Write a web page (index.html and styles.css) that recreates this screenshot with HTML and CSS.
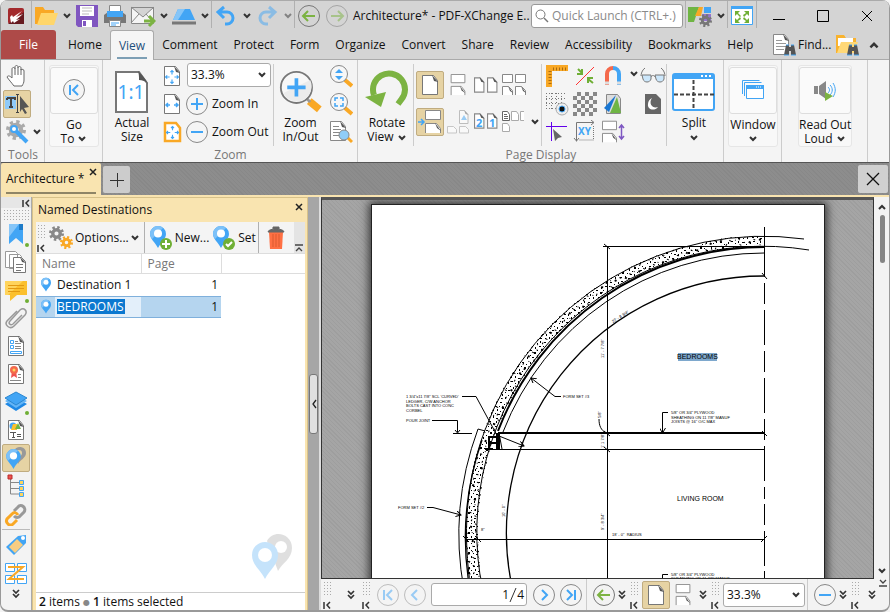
FILE: index.html
```html
<!DOCTYPE html>
<html lang="en">
<head>
<meta charset="utf-8">
<title>Architecture* - PDF-XChange Editor</title>
<link rel="stylesheet" href="styles.css">
</head>
<body>
<svg class="defs" aria-hidden="true">
<defs>
<symbol id="chev" viewBox="0 0 10 10"><path d="M2 3l3 3 3-3" fill="none" stroke="#333" stroke-width="2"/></symbol>
<symbol id="dbl" viewBox="0 0 10 12"><path d="M2 2l3 3 3-3M2 6l3 3 3-3" fill="none" stroke="#333" stroke-width="1.700"/></symbol>
<symbol id="first" viewBox="0 0 8 8"><path d="M1 1v7M7 1L4 4l3 3.500" fill="none" stroke="#333" stroke-width="1.500"/></symbol>
<symbol id="under" viewBox="0 0 10 8"><path d="M1 1h8M2 7l3-3 3 3" fill="none" stroke="#444" stroke-width="1.300"/></symbol>
<symbol id="ring" viewBox="0 0 24 24"><circle cx="12" cy="12" r="10.500" fill="#f5f5f5" stroke="#888" stroke-width="1"/></symbol>
<symbol id="goFirst" viewBox="0 0 24 24"><use href="#ring"/><path d="M8 7v10M16 7l-5 5 5 5" fill="none" stroke="#42a5f5" stroke-width="2"/></symbol>
<symbol id="goPrev" viewBox="0 0 24 24"><use href="#ring"/><path d="M14 7l-5 5 5 5" fill="none" stroke="#42a5f5" stroke-width="2"/></symbol>
<symbol id="goNext" viewBox="0 0 24 24"><use href="#ring"/><path d="M10 7l5 5-5 5" fill="none" stroke="#42a5f5" stroke-width="2"/></symbol>
<symbol id="goLast" viewBox="0 0 24 24"><use href="#ring"/><path d="M8 7l5 5-5 5M16 7v10" fill="none" stroke="#42a5f5" stroke-width="2"/></symbol>
<symbol id="back" viewBox="0 0 24 24"><circle cx="12" cy="12" r="10.500" fill="none" stroke="#777"/><path d="M6 12h12M11 7l-5 5 5 5" fill="none" stroke="#7cb342" stroke-width="2"/></symbol>
<symbol id="plus" viewBox="0 0 24 24"><use href="#ring"/><path d="M12 6v12M6 12h12" stroke="#42a5f5" stroke-width="2"/></symbol>
<symbol id="minus" viewBox="0 0 24 24"><use href="#ring"/><path d="M6 12h12" stroke="#42a5f5" stroke-width="2"/></symbol>
<symbol id="sheet" viewBox="0 0 24 24"><path d="M4.500 2.500h11l4 5v14h-15z" fill="#fff" stroke="#777"/><path d="M14 2l6 7-4-1z" fill="#555"/></symbol>
<symbol id="mini" viewBox="0 0 10 14"><path d="M.500.500h5l3.500 4v9H.500z" fill="#fff" stroke="#888"/><path d="M5 0l4.500 5-3-1z" fill="#555"/></symbol>
<symbol id="pin" viewBox="0 0 16 22"><path d="M8 0a8 8 0 0 1 8 8c0 5-5 8-8 14C5 16 0 13 0 8a8 8 0 0 1 8-8z" fill="#42a5f5"/><path d="M8 0a8 8 0 0 1 5 2L2 13C1 11 0 10 0 8a8 8 0 0 1 8-8z" fill="#7dc1f8"/><circle cx="8" cy="7.500" r="4" fill="#fff"/></symbol>
<symbol id="pair" viewBox="0 0 16 24"><path d="M.500.500h15v9H.500z" fill="#fff" stroke="#888"/><path d="M.500 23v-9.500h11l4 5V23" fill="#fff" stroke="#888"/><path d="M10 13l6 8-4-3z" fill="#555"/></symbol>
<symbol id="lens" viewBox="0 0 24 24"><path d="M16 16l7 6" stroke="#f9a825" stroke-width="4"/><circle cx="10" cy="10" r="8.500" fill="#f7f7f7" stroke="#888"/></symbol>
<symbol id="gear" viewBox="0 0 20 20"><circle cx="10" cy="10" r="8" fill="none" stroke="currentColor" stroke-width="4" stroke-dasharray="3.140"/><circle cx="10" cy="10" r="5" fill="none" stroke="currentColor" stroke-width="4.500"/></symbol>
<symbol id="arrows" viewBox="0 0 20 20"><path d="M10 2v5M10 13v5M2 10h5M13 10h5M8 4l2-2 2 2M8 16l2 2 2-2M4 8l-2 2 2 2M16 8l2 2-2 2" fill="none" stroke="#42a5f5" stroke-width="1.500"/></symbol>
<symbol id="binoc" viewBox="0 0 12 12"><path d="M2 1h3v2h2V1h3l2 10H7V7H5v4H0z" fill="#555"/><path d="M0 11h5M7 11h5M2 1h3M7 1h3" stroke="#42a5f5"/></symbol>
<pattern id="concrete" width="22" height="20" patternUnits="userSpaceOnUse"><rect width="22" height="20" fill="#fff"/><path d="M1 2h1v2H1zM4 1h2v1H4zM8 3h1v1H8zM11 1h1v2h-1zM15 2h2v1h-2zM19 4h1v1h-1zM3 6h1v1H3zM6 7h1v2H6zM10 6h2v1h-2zM14 6h1v1h-1zM17 7h2v2h-2zM21 8h1v1h-1zM1 10h2v1H1zM8 10h1v1H8zM12 9h1v2h-1zM15 11h1v1h-1zM20 12h1v1h-1zM5 12h2v2H5zM10 13h1v1h-1zM13 14h2v1h-2zM17 14h1v2h-1zM1 15h1v1H1zM3 17h2v1H3zM8 16h1v2H8zM11 18h2v1h-2zM16 18h1v1h-1zM20 17h1v2h-1z" fill="#000"/></pattern>
<pattern id="pebbles" width="17" height="19" patternUnits="userSpaceOnUse" patternTransform="rotate(27)"><path d="M2 1h2v2H2zM9 2h1v2H9zM14 4h2v1h-2zM5 6h1v1H5zM11 8h2v2h-2zM1 10h1v2H1zM7 11h1v1H7zM15 13h1v1h-1zM4 15h2v1H4zM10 16h2v1h-2z" fill="#000"/></pattern>
<marker id="arr" markerWidth="6" markerHeight="6" refX="5" refY="3" orient="auto" markerUnits="userSpaceOnUse"><path d="M0 0l5 3-5 3" fill="none" stroke="#000"/></marker>
</defs>
</svg>

<div class="window">
<header class="titlebar">
  <span class="cell logo"><svg width="18" height="18" viewBox="0 0 18 18"><rect x="1" y="1" width="16" height="16" rx="2" fill="#a32a2d"/><path d="M1 17L17 5v12z" fill="#661a20"/><path d="M3 10l2-2 1 2 9-6-6 6 7-3-7 6 4-1-6 4-1-2-2 2z" fill="#fff"/></svg></span>
  <i class="sep"></i>
  <button class="cell wide" aria-label="Open"><svg width="24" height="24" viewBox="0 0 24 24"><path d="M1 3h8l2 3h9v14H1z" fill="#f9a825"/><path d="M3 21L7 9h17l-4 12z" fill="#ffd66b"/></svg></button>
  <button class="drop" aria-label="Open options"><svg width="10" height="10"><use href="#chev"/></svg></button>
  <button class="cell wide" aria-label="Save"><svg width="24" height="24" viewBox="0 0 24 24"><path d="M1 1h22v22H3l-2-2z" fill="#8056c0"/><path d="M5 2h14v10H5zM7 16h10v7H7z" fill="#fff"/><path d="M7 4h10M7 7h10M7 10h7" stroke="#bbb"/><path d="M8 17h3v5H8z" fill="#8056c0"/></svg></button>
  <button class="cell wide" aria-label="Print"><svg width="24" height="24" viewBox="0 0 24 24"><path d="M6.500 1.500h11v8h-11z" fill="#fff" stroke="#888"/><path d="M1 11l4-3h14l4 3v8H1z" fill="#777"/><path d="M4 7h16v6H4z" fill="#42a5f5"/><path d="M6.500 16.500h11v6h-11z" fill="#fff" stroke="#888"/><path d="M8 19h8M8 21h5" stroke="#42a5f5"/></svg></button>
  <button class="cell wide" aria-label="Email"><svg width="26" height="24" viewBox="0 0 26 24"><path d="M1.500 3.500h22v16h-22zM1 3l12 10L24 3M1 19l8-9M24 19l-8-9" fill="#f5f5f5" stroke="#888"/><path d="M14 17h9M19 12l5 5-5 5" fill="none" stroke="#7cb342" stroke-width="3"/></svg></button>
  <button class="drop" aria-label="Email options"><svg width="10" height="10"><use href="#chev"/></svg></button>
  <button class="cell wide" aria-label="Scan"><svg width="26" height="24" viewBox="0 0 26 24"><path d="M7 5h12l5 11H2z" fill="#42a5f5"/><path d="M7 5h7L7 16H2z" fill="#85c5f8"/><path d="M1 19h24" stroke="#777" stroke-width="3"/></svg></button>
  <button class="drop" aria-label="Scan options"><svg width="10" height="10"><use href="#chev"/></svg></button>
  <i class="sep"></i>
  <button class="cell wide" aria-label="Undo"><svg width="22" height="22" viewBox="0 0 22 22"><path d="M3 7h9a6 6 0 0 1 0 12h-2M9 2L3 7l6 6" fill="none" stroke="#42a5f5" stroke-width="3"/></svg></button>
  <button class="drop" aria-label="Undo history"><svg width="10" height="10"><use href="#chev"/></svg></button>
  <button class="cell wide dim" aria-label="Redo"><svg width="22" height="22" viewBox="0 0 22 22"><path d="M19 7h-9a6 6 0 0 0 0 12h2M13 2l6 5-6 6" fill="none" stroke="#42a5f5" stroke-width="3"/></svg></button>
  <button class="drop dim" aria-label="Redo history"><svg width="10" height="10"><use href="#chev"/></svg></button>
  <i class="sep"></i>
  <button class="cell wide" aria-label="Back"><svg width="24" height="24"><use href="#back"/></svg></button>
  <button class="cell wide dim" aria-label="Forward"><svg class="flip" width="24" height="24"><use href="#back"/></svg></button>
  <span class="title">Architecture* - PDF-XChange E..</span>
  <label class="search"><svg width="14" height="14" viewBox="0 0 14 14"><circle cx="5.500" cy="5.500" r="4.500" fill="none" stroke="#777"/><path d="M9 9l4 4" stroke="#777" stroke-width="1.500"/></svg><input type="text" placeholder="Quick Launch (CTRL+.)" aria-label="Quick Launch"></label>
  <i class="sep"></i>
  <button class="cell wide" aria-label="Customize"><svg width="26" height="24" viewBox="0 0 26 24"><path d="M1 3h11l-5 15H1z" fill="#6fb544"/><path d="M12 3h4l-2 9H8z" fill="#f9a825"/><path d="M17 3h7v6h-7z" fill="#42a5f5"/><path d="M15 10h9v7h-9z" fill="#9575cd"/><svg x="12" y="10" width="13" height="13" color="#777"><use href="#gear"/></svg></svg></button>
  <button class="drop" aria-label="Customize options"><svg width="10" height="10"><use href="#chev"/></svg></button>
  <i class="sep"></i>
  <button class="cell wide" aria-label="Full screen"><svg width="24" height="22" viewBox="0 0 24 22"><path d="M1.500 1.500h21v18h-21z" fill="#fff" stroke="#42a5f5"/><path d="M1 1h22v3H1z" fill="#42a5f5"/><path d="M5 6h5l-2 2 3 3-1 1-3-3-2 2zM19 6h-5l2 2-3 2 1 2 3-3 2 2zM5 18h5l-2-2 3-2-1-2-3 3-2-2zM19 18h-5l2-2-3-2 1-2 3 3 2-2z" fill="#6faf35"/></svg></button>
  <i class="sep"></i>
  <button class="win" aria-label="Minimize"><svg width="14" height="14"><path d="M1 10.500h12" stroke="#000"/></svg></button>
  <button class="win" aria-label="Maximize"><svg width="14" height="14"><path d="M1.500 1.500h11v11h-11z" fill="none" stroke="#000"/></svg></button>
  <button class="win" aria-label="Close"><svg width="14" height="14"><path d="M2 2l10 10M12 2L2 12" stroke="#000"/></svg></button>
</header>

<nav class="tabs">
  <button class="file">File</button>
  <div class="tablist">
    <button>Home</button><button class="current">View</button><button>Comment</button><button>Protect</button><button>Form</button><button>Organize</button><button>Convert</button><button>Share</button><button>Review</button><button>Accessibility</button><button>Bookmarks</button><button>Help</button>
  </div>
  <button class="find"><svg width="24" height="24" viewBox="0 0 24 24"><path d="M1.500 1.500h11l4 5v15h-15z" fill="#fff" stroke="#888"/><path d="M4 7.500h6M4 10.500h10M4 13.500h10M4 16.500h8" stroke="#999"/><path d="M11 1l6 7-4-1z" fill="#555"/><use href="#binoc" x="12" y="11" width="12" height="12"/></svg>Find...</button>
  <button aria-label="Search files"><svg width="24" height="24" viewBox="0 0 24 24"><path d="M1 2h8l2 3h10v15H1z" fill="#f9b32f"/><path d="M3 5h15v8H3z" fill="#fff"/><path d="M2 20L6 9h17l-4 11z" fill="#ffd877"/><use href="#binoc" x="12" y="11" width="12" height="12"/></svg></button>
  <button class="fold" aria-label="Collapse ribbon"><svg class="up" width="12" height="12"><use href="#chev"/></svg></button>
</nav>

<section class="ribbon">
  <div class="group">
    <div class="body tools">
      <button class="sq" aria-label="Hand"><svg width="24" height="24" viewBox="0 0 24 24"><path d="M9 22C6 18 4 16 2 13c1-2 3-1 5 1V5c0-2 3-2 3 0V3c0-2 3-2 3 0v1c0-2 3-2 3 0v2c1-1 3-1 3 1v9c0 3-1 4-2 6zM10 5v6M13 4v7M16 5v6" fill="#fff" stroke="#666"/></svg></button>
      <button class="sq on" aria-label="Select text"><svg width="26" height="24" viewBox="0 0 26 24"><path d="M1 4h11v13H1z" fill="#8fcaf8"/><path d="M3 6h8v2M7 6v9M5 15h4M3 6v2" fill="none" stroke="#444" stroke-width="2"/><path d="M13.500 3v17M12 2.500h3M12 20.500h3" stroke="#444"/><path d="M16 4l9 11-5 1 3 5-2 1-3-5-2 3z" fill="#555"/></svg></button>
      <span class="row"><button class="sq" aria-label="Tool settings"><svg width="24" height="24" viewBox="0 0 24 24" color="#aaa"><use href="#gear" x="1" y="0" width="20" height="20"/><path d="M8 8l14 14" stroke="#42a5f5" stroke-width="4"/><circle cx="9" cy="9" r="3" fill="#fff" stroke="#42a5f5" stroke-width="2"/></svg></button><button class="drop" aria-label="More tools"><svg width="10" height="10"><use href="#chev"/></svg></button></span>
    </div>
    <h2>Tools</h2>
  </div>
  <div class="group">
    <button class="card"><span class="tile"><svg width="24" height="24"><use href="#goFirst"/></svg></span>Go<br>To <svg width="10" height="10"><use href="#chev"/></svg></button>
  </div>
  <div class="group">
    <div class="body">
      <button class="big"><svg width="36" height="44" viewBox="0 0 36 44"><path d="M2 2h23l8 11v29H2z" fill="#fff" stroke="#777" stroke-width="2"/><path d="M24 1c3 3 8 8 10 13-2-3-6-4-9-4 0-3 0-6-1-9z" fill="#555"/><text x="17" y="29" text-anchor="middle" class="ratio">1:1</text></svg>Actual<br>Size</button>
      <div class="col">
        <button class="sq" aria-label="Fit page"><svg width="24" height="24" viewBox="0 0 24 24"><use href="#sheet" width="24" height="24"/><use href="#arrows" x="4" y="5" width="16" height="16"/></svg></button>
        <button class="sq" aria-label="Fit width"><svg width="24" height="24" viewBox="0 0 24 24"><use href="#sheet" width="24" height="24"/><path d="M6 13h4M14 13h4M8 11l-2 2 2 2M16 11l2 2-2 2" fill="none" stroke="#42a5f5" stroke-width="1.500"/></svg></button>
        <button class="sq" aria-label="Fit visible"><svg width="24" height="24" viewBox="0 0 24 24"><path d="M5 3h11l4 5v13H5z" fill="#fff" stroke="#f9a825" stroke-width="2.500"/><use href="#arrows" x="5" y="5" width="15" height="15"/></svg></button>
      </div>
      <div class="col zoomcol">
        <span class="combo"><select aria-label="Zoom level"><option>33.3%</option></select><svg width="10" height="10"><use href="#chev"/></svg></span>
        <button class="line"><svg width="24" height="24"><use href="#plus"/></svg>Zoom In</button>
        <button class="line"><svg width="24" height="24"><use href="#minus"/></svg>Zoom Out</button>
      </div>
      <i class="rule"></i>
      <button class="big zoomio"><svg width="48" height="48" viewBox="0 0 48 48"><path d="M33 34l11 9" stroke="#f9a825" stroke-width="8"/><path d="M30 31l4 4" stroke="#999" stroke-width="3"/><circle cx="19" cy="19" r="17" fill="#f7f7f7" stroke="#777" stroke-width="2"/><path d="M5 25a16 16 0 0 0 29-14z" fill="#ebebeb"/><path d="M19 9v20M9 19h20" stroke="#42a5f5" stroke-width="4"/></svg>Zoom<br>In/Out</button>
      <div class="col">
        <button class="sq" aria-label="Dynamic zoom"><svg width="24" height="24"><use href="#lens"/><path d="M6 9l4-4 4 4zM6 12l4 4 4-4z" fill="#42a5f5"/></svg></button>
        <button class="sq" aria-label="Zoom to selection"><svg width="24" height="24"><use href="#lens"/><path d="M6 9V6h3M11 6h3v3M14 11v3h-3M9 14H6v-3" fill="none" stroke="#42a5f5" stroke-width="1.500"/></svg></button>
        <button class="sq" aria-label="Loupe"><svg width="24" height="24"><path d="M1.500 1.500h11l4 5v14h-15zM4 6.500h6M4 9.500h8M4 12.500h7M4 15.500h6" fill="#fff" stroke="#888"/><path d="M11 1l6 7-4-1z" fill="#555"/><path d="M19 18l4 4" stroke="#f9a825" stroke-width="3"/><circle cx="15" cy="15" r="5" fill="#90cdf8" stroke="#888"/></svg></button>
      </div>
    </div>
    <h2>Zoom</h2>
  </div>
  <div class="group">
    <div class="body">
      <button class="big rotate"><svg width="46" height="44" viewBox="0 0 46 44"><path d="M10 25a16 16 0 1 1 27 5l-3 4" fill="none" stroke="#7cb342" stroke-width="6"/><path d="M1 27l21-5-5 15z" fill="#7cb342"/></svg>Rotate<br>View <svg width="10" height="10"><use href="#chev"/></svg></button>
      <i class="rule"></i>
      <div class="layouts">
        <button class="sq on" aria-label="Single page"><svg width="24" height="24"><use href="#sheet"/></svg></button>
        <button class="sq" aria-label="Continuous"><svg width="16" height="22"><use href="#pair"/></svg></button>
        <button class="sq" aria-label="Two pages"><svg width="24" height="16"><use href="#mini" x="0" y="0" width="11" height="16"/><use href="#mini" x="13" y="0" width="11" height="16"/></svg></button>
        <button class="sq" aria-label="Two pages continuous"><svg width="26" height="24"><path d="M1.500 1.500h10v8h-10zM14.500 1.500h10v8h-10zM1.500 22v-8.500h6l4 4V22M14.500 22v-8.500h6l4 4V22" fill="#fff" stroke="#888"/><path d="M7 13l5 7-3-2zM20 13l5 7-3-2z" fill="#555"/></svg></button>
        <i></i>
        <button class="sq on" aria-label="Show gaps"><svg width="24" height="24"><use href="#pair" x="7" width="16" height="24"/><path d="M0 12h6M3 9l3 3-3 3" fill="none" stroke="#42a5f5" stroke-width="1.500"/></svg></button>
        <button class="sq dim" aria-label="Cover page"><svg width="24" height="24"><use href="#mini" x="13" y="0" width="10" height="14"/><path d="M15 10l3-5 3 5z" fill="#42a5f5"/><path d="M1.500 16.500h6l3 3V23h-9zM13.500 16.500h6l3 3V23h-9z" fill="#fff" stroke="#999"/></svg></button>
        <button class="sq" aria-label="Right to left"><svg width="26" height="18"><use href="#mini" x="1" width="11" height="16"/><use href="#mini" x="14" width="11" height="16"/><text x="3" y="14" class="num">2</text><text x="16" y="14" class="num">1</text></svg></button>
        <button class="sq" aria-label="Spread rows"><svg width="26" height="24"><path d="M1.500 1.500h5l2 3v6h-7zM3 4.500h3M3 6.500h4M3 8.500h4" fill="#fff" stroke="#666"/><path d="M10.500 1.500h5l2 3v6h-7zM1.500 13.500h5l2 3v5h-7zM23 1.500h-3.500v9H23" fill="#fff" stroke="#aaa"/></svg></button>
        <button class="drop" aria-label="More layouts"><svg width="10" height="10"><use href="#chev"/></svg></button>
      </div>
      <i class="rule"></i>
      <div class="guides">
        <button class="sq" aria-label="Rulers"><svg width="24" height="24"><path d="M1 1h22v6H7v16H1z" fill="#f9a825"/><path d="M5 7v15M8 5h14" stroke="#a96b10" stroke-dasharray="1 2" stroke-width="3"/></svg></button>
        <button class="sq" aria-label="Snap"><svg width="24" height="24"><path d="M3 21L21 3" stroke="#f33"/><path d="M5 5l4 4M9 5v5H4M20 19l-5-4M15 19v-5h5" fill="none" stroke="#6faf35" stroke-width="2"/></svg></button>
        <button class="sq" aria-label="Magnet"><svg width="24" height="24"><path d="M6 21V10a6 6 0 0 1 6-6" fill="none" stroke="#f4694c" stroke-width="4"/><path d="M12 4a6 6 0 0 1 6 6v11" fill="none" stroke="#42a5f5" stroke-width="4"/><path d="M4 19h4M16 19h4" stroke="#ddd" stroke-width="3"/></svg></button>
        <button class="drop" aria-label="Snap options"><svg width="10" height="10"><use href="#chev"/></svg></button>
        <button class="sq" aria-label="Reading"><svg width="26" height="20"><path d="M5 2C2 4 1 8 1 10M21 2c3 2 4 6 4 8M11 11c1-2 3-2 4 0" fill="none" stroke="#777"/><path d="M2 9h9v4c-1 4-7 4-8 0zM15 9h9v4c-1 4-7 4-8 0z" fill="#cce7fb" stroke="#777"/></svg></button>
        <button class="sq" aria-label="Grid"><svg width="24" height="24"><path d="M1 1.500h19M1 6.500h19M1 11.500h19M1 16.500h10M1.500 1v18M6.500 1v18M11.500 1v12M16.500 1v12" stroke="#777" stroke-dasharray="1 2"/><circle cx="17" cy="17" r="6" fill="#eee" stroke="#aaa"/><circle cx="17" cy="17" r="3" fill="#111" stroke="#42a5f5"/></svg></button>
        <button class="sq" aria-label="Transparency grid"><span class="checker"></span></button>
        <button class="sq" aria-label="Thin lines"><svg width="22" height="22"><path d="M4.500 1.500h11l3 4v15h-14z" fill="#ddd" stroke="#888"/><path d="M14 2L2 15l5 4z" fill="#1976d2"/><path d="M15 4l4 16H8z" fill="#6fb544"/></svg></button>
        <i></i>
        <button class="sq" aria-label="Dark mode"><svg width="18" height="22"><path d="M1 1h11l5 5v15H1z" fill="#666"/><path d="M8 5c-4 6 1 11 6 9-4 5-11 2-10-3 0-3 2-5 4-6z" fill="#fff"/></svg></button>
        <button class="sq" aria-label="Guides"><svg width="24" height="24"><path d="M1 6.500h21M6.500 2v19" stroke="#6200ea"/><path d="M8 9l9 8-4 1-3 3z" fill="#666"/></svg></button>
        <button class="sq" aria-label="Coordinates"><svg width="24" height="24"><path d="M3.500 2.500h17M3.500 2.500v19M18 0l3 2.500-3 2.500M1 18l2.500 3 2.500-3" fill="none" stroke="#777"/><path d="M20.500 6v14H6" fill="none" stroke="#777" stroke-dasharray="1 1"/><text x="5" y="15" class="xy">XY</text></svg></button>
        <button class="sq" aria-label="Page gap"><svg width="24" height="24"><use href="#pair" x="1" width="15" height="24"/><path d="M20.500 6v12M18 8l2.500-3L23 8M18 16l2.500 3 2.500-3" fill="none" stroke="#7e57c2" stroke-width="1.500"/></svg></button>
      </div>
      <i class="rule"></i>
      <button class="big split"><svg width="44" height="44" viewBox="0 0 44 44"><rect x="1" y="4" width="41" height="36" rx="2" fill="#fff" stroke="#42a5f5" stroke-width="2"/><path d="M1 4h41v5H1z" fill="#42a5f5"/><path d="M29 6h2M33 6h2M37 6h2" stroke="#fff" stroke-width="2"/><path d="M21.500 10v30M2 24.500h40" stroke="#444" stroke-width="2" stroke-dasharray="4 2"/></svg>Split<br><svg width="10" height="10"><use href="#chev"/></svg></button>
    </div>
    <h2>Page Display</h2>
  </div>
  <div class="group">
    <button class="card"><span class="tile"><svg width="24" height="24"><path d="M1.500 16V2.500h17M3.500 18V4.500h17" fill="none" stroke="#42a5f5"/><path d="M5.500 7.500h17v13h-17z" fill="#fff" stroke="#42a5f5"/><path d="M5 7h18v4H5z" fill="#42a5f5"/><path d="M15 9h6" stroke="#fff" stroke-dasharray="1 1"/></svg></span>Window<br><svg width="10" height="10"><use href="#chev"/></svg></button>
  </div>
  <div class="group read">
    <button class="card"><span class="tile"><svg width="24" height="24"><path d="M1 8h4v8H1zM6 8l7-5v18l-7-5z" fill="#888"/><path d="M15 9c2 2 2 4 0 6M17 7c3 3 3 7 0 10M20 5c3 5 3 9 0 14" fill="none" stroke="#42a5f5"/><path d="M12 14l8 4-8 5z" fill="#7cb342"/></svg></span>Read Out<br>Loud <svg width="10" height="10"><use href="#chev"/></svg></button>
  </div>
</section>

<div class="docbar">
  <div class="doctab"><span>Architecture *</span><button aria-label="Close tab"><svg width="8" height="8"><path d="M1 1l6 6M7 1L1 7" stroke="#222" stroke-width="1.500"/></svg></button></div>
  <button class="newtab" aria-label="New tab"><svg width="16" height="16"><path d="M8.500 1v14M1 8.500h14" stroke="#333"/></svg></button>
  <button class="closedoc" aria-label="Close document"><svg width="14" height="14"><path d="M1 1l12 12M13 1L1 13" stroke="#111" stroke-width="1.300"/></svg></button>
</div>

<main class="work">
  <aside class="side">
    <span class="sidetop"><svg width="8" height="8"><use href="#first"/></svg></span>
    <i class="grip"></i>
    <button class="sq dot" aria-label="Bookmarks"><svg width="16" height="22"><path d="M1 1h14v20l-7-6-7 6z" fill="#42a5f5"/><path d="M1 1h10L1 14z" fill="#85c5f8"/><path d="M11 1h4v6h-4z" fill="#1e7bc8"/></svg></button>
    <button class="sq" aria-label="Thumbnails"><svg width="24" height="24"><path d="M1.500 1.500h10l2 2v14h-12zM5.500 4.500h10l2 2v12h-12z" fill="#fff" stroke="#999"/><path d="M9.500 7.500h8l4 4v11h-12zM12 14.500h7M12 17.500h7M12 20.500h5" fill="#fff" stroke="#777"/><path d="M16 7l6 6-4-1z" fill="#555"/></svg></button>
    <button class="sq dot" aria-label="Comments"><svg width="24" height="22"><path d="M1 2h22v14H13l-7 6v-6H1z" fill="#fbc02d"/><path d="M1 2h18L4 16H1z" fill="#ffd45c"/><path d="M4 6.500h16M4 9.500h16M4 12.500h12" stroke="#e39a12"/></svg></button>
    <button class="sq" aria-label="Attachments"><svg width="24" height="24"><path d="M18 9l-9 9c-3 2-5-1-3-3L16 4c4-3 8 1 5 5L10 20c-4 4-10-1-7-5L13 5" fill="none" stroke="#999" stroke-width="1.500"/></svg></button>
    <button class="sq" aria-label="Fields"><svg width="24" height="24"><use href="#sheet"/><path d="M6.500 6.500h3v3h-3zM6.500 11.500h3v3h-3zM6.500 17.500h11v2h-11z" fill="none" stroke="#42a5f5"/><path d="M11 7.500h3M11 9.500h6M11 12.500h6M11 14.500h6" stroke="#888"/></svg></button>
    <button class="sq" aria-label="Signatures"><svg width="24" height="24"><use href="#sheet"/><path d="M8 9l-1 7 3-2 3 2-1-7z" fill="#ef5350"/><circle cx="10" cy="8" r="4" fill="#f4694c"/><circle cx="10" cy="8" r="1.500" fill="#ffd45c"/><path d="M14 12.500h3M14 15.500h3M6 18.500h11" stroke="#888"/></svg></button>
    <button class="sq dot" aria-label="Layers"><svg width="24" height="22"><path d="M1 13l11-6 11 6-11 7z" fill="#1e88e5"/><path d="M1 10l11-6 11 6-11 7z" fill="#64b5f6"/><path d="M1 7l11-6 11 6-11 7z" fill="#42a5f5" stroke="#2b87d1"/></svg></button>
    <button class="sq" aria-label="Content"><svg width="24" height="24"><use href="#sheet"/><circle cx="9" cy="8" r="3.500" fill="#42a5f5"/><path d="M9 6h4v6H7z" fill="#fbc02d"/><path d="M14 5l3 6h-6z" fill="#6fb544"/><path d="M6 14.500h6M9.500 14v6M8 19.500h3M13 16.500h4M13 18.500h4" stroke="#555"/></svg></button>
    <button class="sq on" aria-label="Named destinations"><svg width="24" height="24"><path d="M10 5c2-6 12-5 12 2 0 5-6 7-8 11z" fill="#999"/><circle cx="15" cy="7" r="3" fill="#e6d3a4"/><use href="#pin" x="2" y="3" width="15" height="20"/></svg></button>
    <button class="sq" aria-label="Model tree"><svg width="22" height="24"><path d="M5.500 4v16H14M5 8.500h9M5 14.500h9" fill="none" stroke="#888"/><path d="M3 1h4v4H3z" fill="#ef5350" stroke="#ba2c28"/><path d="M14.500 6.500h4v4h-4zM14.500 12.500h4v4h-4zM14.500 18.500h4v4h-4z" fill="#ffd45c" stroke="#42a5f5"/></svg></button>
    <button class="sq" aria-label="Links"><svg width="24" height="24"><path d="M10 9l4-4c3-4 9 1 6 5l-5 5c-2 1-4 0-5-1" fill="none" stroke="#999" stroke-width="3"/><path d="M14 13c-2-3-4-3-6-1l-5 5c-2 4 3 8 6 5l4-4" fill="none" stroke="#f9a825" stroke-width="3"/></svg></button>
    <hr>
    <button class="sq" aria-label="Tags"><svg width="24" height="24"><path d="M2 14L14 3l8-1v8L10 22z" fill="#42a5f5"/><path d="M5 14l8-8 6 6-8 8z" fill="#f8cd82"/><circle cx="19" cy="5" r="2" fill="#fff"/></svg></button>
    <button class="sq" aria-label="Order"><svg width="24" height="24"><path d="M1.500 2.500h9v8h-9zM13.500 2.500h9v8h-9zM1.500 14.500h9v8h-9zM13.500 14.500h9v8h-9z" fill="#fff" stroke="#42a5f5"/><path d="M4 6h15L5 18h15" fill="none" stroke="#f9a825" stroke-width="2"/></svg></button>
    <svg class="more" width="10" height="12"><use href="#dbl"/></svg>
  </aside>

  <section class="panel">
    <header><h1>Named Destinations</h1><button aria-label="Close pane"><svg width="8" height="8"><path d="M1 1l6 6M7 1L1 7" stroke="#222" stroke-width="1.500"/></svg></button></header>
    <div class="ptools">
      <span class="handle"><i class="grip"></i><svg width="8" height="8"><use href="#first"/></svg></span>
      <button class="line"><svg width="24" height="24"><svg width="15" height="15" color="#888"><use href="#gear"/></svg><svg x="11" y="10" width="13" height="13" color="#f9a825"><use href="#gear"/></svg></svg>Options...</button>
      <button class="drop" aria-label="Options menu"><svg width="10" height="10"><use href="#chev"/></svg></button>
      <i class="sep"></i>
      <button class="line"><svg width="24" height="24"><use href="#pin" x="1" y="0" width="16" height="22"/><circle cx="17" cy="18" r="6" fill="#6faf35"/><path d="M17 14v8M13 18h8" stroke="#fff" stroke-width="2"/></svg>New...</button>
      <button class="line"><svg width="24" height="24"><use href="#pin" x="1" y="0" width="16" height="22"/><circle cx="17" cy="18" r="6" fill="#6faf35"/><path d="M14 18l2 2 4-4" fill="none" stroke="#fff" stroke-width="2"/></svg>Set</button>
      <i class="sep"></i>
      <button class="cell" aria-label="Delete"><svg width="18" height="24"><path d="M2 6h14l-1 17H3z" fill="#ff7043"/><path d="M6 8v13M9 8v13M12 8v13" stroke="#d95a30"/><path d="M1 6c0-4 16-4 16 0zM6 3V1h6v2" fill="#666" stroke="#666"/></svg></button>
      <span class="overflow"><svg width="10" height="8"><use href="#under"/></svg></span>
    </div>
    <div class="list">
      <table>
        <colgroup><col class="c1"><col class="c2"><col></colgroup>
        <thead><tr><th>Name</th><th>Page</th><th></th></tr></thead>
        <tbody>
          <tr><td><span class="name"><svg width="10" height="15"><use href="#pin"/></svg>Destination 1</span></td><td>1</td><td></td></tr>
          <tr class="picked"><td><span class="name"><svg width="10" height="15"><use href="#pin"/></svg><span class="edit"><input type="text" value="BEDROOMS" aria-label="Destination name"></span></span></td><td>1</td><td></td></tr>
        </tbody>
      </table>
      <svg class="mark" width="42" height="48" viewBox="0 0 42 48"><path d="M16 8C22-4 41 0 41 15c0 11-10 15-14 23z" fill="#999"/><circle cx="30" cy="14" r="6" fill="#fff"/><path d="M14 9a13 13 0 0 1 13 13c0 10-8 14-13 24C9 36 1 32 1 22A13 13 0 0 1 14 9z" fill="#42a5f5"/><circle cx="14" cy="22" r="7" fill="#fff"/></svg>
    </div>
    <footer><b>2</b> items <em>●</em> <b>1</b> items selected</footer>
  </section>

  <div class="splitter"><button aria-label="Collapse pane"><svg width="6" height="10"><path d="M5 1L2 5l3 4" fill="none" stroke="#222" stroke-width="1.300"/></svg></button></div>

  <section class="viewer">
    <div class="canvas">
      <div class="paper">
      <svg viewBox="371 205 452 390" width="452" height="390" fill="none" stroke="#000">
        <path id="wall" d="M763 236A297 297 0 0 0 465 540L468 590 480 590 477 540A286 286 0 0 1 763 246z" fill="url(#concrete)" stroke="none"/>
        <use href="#wall"/>
        <path d="M763 236A297 297 0 0 0 465 540L468 590 480 590 477 540A286 286 0 0 1 763 246z" fill="url(#pebbles)" stroke="none"/>
        <path d="M803 239A297 297 0 0 0 484 430C461 490 463 550 471 595M808 250A286 286 0 0 0 479 575L484 595"/>
        <path d="M763 247A286 286 0 0 0 497 431" stroke-width="2"/>
        <path d="M481 440A299 299 0 0 0 469 590" stroke-width="1.300"/>
        <path d="M763 253A280 280 0 0 0 502 432M484 431l-7-2A304 304 0 0 0 463 590"/>
        <path d="M763 276A257 257 0 0 0 513 595" stroke-width="1.300"/>
        <path d="M606.500 246v345M602 246.500h161M488 449.500h275M465 539.500h298"/>
        <path d="M497 433h266" stroke-width="2"/>
        <path d="M763.500 227v50M763.500 283v21M763.500 310v35M763.500 351v21M763.500 378v35M763.500 419v21M763.500 446v35M763.500 487v12M763.500 504v21M763.500 531v35M763.500 571v24"/>
        <path d="M497 433v16" stroke-width="4"/><path d="M488 436v14M487 437h10M489 443h8M484 449h8" stroke-width="2"/>
        <path d="M603 244l6 5M603 431l6 5M603 447l6 5M760 542l6-6M462 536l6 6M474 536l6 6M761 273l5 6M761 431l5 5"/>
        <path d="M461 396.500h14l20 37M431 420.500h25.500V432M452 433.500h19M454 430l2.500 3 2.500-3M498 433l3 16"/>
        <path d="M560 396.500h-6L530 378" marker-end="url(#arr)"/><path d="M426 507.500h6L460 515" marker-end="url(#arr)"/>
        <path d="M498 436l25 10" marker-end="url(#arr)"/><path d="M667 412.500h-5.500V433" marker-end="url(#arr)"/><path d="M667 574.500h-5.500V594M598 419c0 7 2 11 7 14"/>
        <rect x="677" y="353" width="39" height="8" fill="#7ea8cd" stroke="none"/>
        <g class="notes">
          <text x="676" y="359" class="room">BEDROOMS</text><text x="676" y="501" class="room">LIVING ROOM</text>
          <text x="562" y="398">FORM SET #3</text><text x="397" y="509">FORM SET #2</text>
          <text x="405" y="398">1 3/4"x11 7/8" SCL 'CURVED'</text><text x="405" y="403">LEDGER, C/W ANCHOR</text><text x="405" y="407">BOLTS CAST INTO CONC</text><text x="405" y="412">CORBEL</text><text x="405" y="422">POUR JOINT</text>
          <text x="670" y="414">5/8" OR 3/4" PLYWOOD</text><text x="670" y="419">SHEATHING ON 11 7/8" MANUF</text><text x="670" y="423">JOISTS @ 16" O/C MAX</text>
          <text x="670" y="576">5/8" OR 3/4" PLYWOOD</text><text x="670" y="580">SHEATHING ON 11 7/8" MANUF</text>
          <text x="611" y="536">18' - 0"  RADIUS</text><text x="480" y="531">8"</text>
          <text transform="translate(603 358) rotate(-90)">11' - 7 7/8"</text><text transform="translate(603 448) rotate(-90)">1' 1 7/8"</text><text transform="translate(600 418) rotate(-90)">5/8"</text><text transform="translate(603 530) rotate(-90)">9' - 8 3/4"</text><text transform="translate(504 517) rotate(-90)">10' - 0"</text><text transform="translate(612 323) rotate(-33)">22' - 8 3/4"</text>
        </g>
      </svg>
      </div>
    </div>
    <div class="scroll"><svg class="up" width="10" height="10"><use href="#chev"/></svg><i></i><svg width="10" height="10"><use href="#chev"/></svg></div>
    <div class="navbar">
      <span class="handle"><i class="grip"></i><svg width="8" height="8"><use href="#first"/></svg></span>
      <svg class="gapl" width="10" height="12"><use href="#dbl"/></svg>
      <span class="handle gapl"><i class="grip"></i><svg width="8" height="8"><use href="#first"/></svg></span>
      <button class="sq dim" aria-label="First page"><svg width="24" height="24"><use href="#goFirst"/></svg></button>
      <button class="sq dim" aria-label="Previous page"><svg width="24" height="24"><use href="#goPrev"/></svg></button>
      <label class="pageno"><input type="text" value="1" aria-label="Page"><svg width="8" height="16"><path d="M7 1L1 15" stroke="#333"/></svg><span>4</span></label>
      <button class="sq" aria-label="Next page"><svg width="24" height="24"><use href="#goNext"/></svg></button>
      <button class="sq" aria-label="Last page"><svg width="24" height="24"><use href="#goLast"/></svg></button>
      <i class="rule"></i>
      <button class="sq" aria-label="Previous view"><svg width="24" height="24"><use href="#back"/></svg></button>
      <svg width="10" height="12"><use href="#dbl"/></svg>
      <span class="handle"><i class="grip"></i><svg width="8" height="8"><use href="#first"/></svg></span>
      <button class="sq on" aria-label="Single page"><svg width="24" height="24"><use href="#sheet"/></svg></button>
      <button class="sq" aria-label="Continuous"><svg width="16" height="22"><use href="#pair"/></svg></button>
      <svg class="gaps" width="10" height="12"><use href="#dbl"/></svg>
      <span class="handle"><i class="grip"></i><svg width="8" height="8"><use href="#first"/></svg></span>
      <span class="combo"><select aria-label="Zoom"><option>33.3%</option></select><svg width="10" height="10"><use href="#chev"/></svg></span>
      <i class="rule"></i>
      <button class="sq" aria-label="Zoom out"><svg width="24" height="24"><use href="#minus"/></svg></button>
      <svg width="10" height="12"><use href="#dbl"/></svg>
      <span class="handle"><i class="grip"></i><svg width="8" height="8"><use href="#first"/></svg></span>
      <svg class="last" width="10" height="12"><use href="#dbl"/></svg>
      <svg class="corner up" width="10" height="8"><use href="#under"/></svg>
    </div>
  </section>
</main>
</div>
</body>
</html>
```
FILE: styles.css
```css
* { box-sizing: border-box; }
body { margin: 0; background: #f4f4f4; font: 12px/14px "Open Sans", "Noto Sans", sans-serif; color: #111; }
button { border: 0; padding: 0; background: none; font: inherit; color: inherit; display: flex; align-items: center; justify-content: center; flex: none; }
input, select { font: inherit; color: inherit; min-width: 0; outline: 0; }
svg { display: block; flex: none; }
h1, h2 { margin: 0; font: inherit; }
.defs { position: absolute; width: 0; height: 0; }
.window { height: 100vh; display: grid; grid-template-columns: minmax(0, 1fr); grid-template-rows: 30px 30px 103px 34px minmax(0, 1fr); border: 1px solid #999; border-width: 0 1px 2px; border-radius: 8px; overflow: hidden; background: #f3f3f3; }
.dim { opacity: .5; }
.flip { transform: scaleX(-1); }
.up { transform: scaleY(-1); }
.sep { flex: none; align-self: stretch; width: 1px; background: #b0b0b0; }

.titlebar { display: flex; align-items: center; background: #d4d4d4; border-top: 1px solid #aaa; }
.cell { width: 26px; height: 26px; display: flex; align-items: center; justify-content: center; flex: none; }
.cell.wide { width: 28px; }
.cell.logo { width: 30px; }
.drop { width: 13px; height: 24px; }
.titlebar .sep { margin-bottom: 2px; }
.title { flex: 1; min-width: 0; white-space: nowrap; overflow: hidden; padding-left: 2px; line-height: 18px; }
.search { flex: none; display: flex; align-items: center; gap: 3px; width: 152px; height: 24px; margin-right: 2px; padding: 0 3px; background: #fff; border: 1px solid #999; border-radius: 3px; }
.search input { flex: 1; border: 0; padding: 0; background: none; }
.search input::placeholder { color: #8a8a8a; }
.win { width: 44px; height: 26px; }

.tabs { display: flex; background: #d4d4d4; border-bottom: 1px solid #aaa; padding-right: 1px; }
.file { width: 55px; background: #ae4a48; color: #fff; border-radius: 3px 3px 0 0; }
.tablist { flex: none; width: 700px; display: flex; justify-content: space-between; padding: 0 0 0 4px; }
.tablist button { padding: 0 8px; }
.tablist .current { position: relative; background: #f5f5f5; border: 1px solid #aaa; border-bottom: 0; border-radius: 3px 3px 0 0; color: #1d4f7c; margin-bottom: -1px; }
.tablist .current::after { content: ""; position: absolute; left: 6px; right: 6px; bottom: 1px; height: 2px; background: #7d9fb5; }
.find { gap: 2px; margin: 0 4px 0 16px; }
.fold { flex: 1; }

.ribbon { display: flex; background: #f4f4f4; border-bottom: 1px solid #555; }
.group { display: flex; flex-direction: column; border-right: 1px solid #ccc; padding: 1px 2px 0 3px; }
.body { display: flex; height: 87px; padding-top: 1px; }
.group h2 { text-align: center; color: #777; line-height: 14px; }
.sq { width: 28px; height: 28px; border: 1px solid transparent; border-radius: 2px; }
.sq.on { background: #e6d3a4; border-color: #c0ac80; }
.tools { flex-direction: column; width: 39px; margin-left: -1px; }
.row { display: flex; }
.row .drop { width: 11px; height: 28px; }
.card { display: block; width: 50px; height: 82px; margin: 4px 1px 0; border: 1px solid #e6e6e6; border-radius: 3px; background: #f8f8f8; white-space: nowrap; }
.card .tile { display: flex; align-items: center; justify-content: center; height: 47px; margin-bottom: 4px; border: 1px solid #ddd; border-radius: 3px; background: #fafafa; }
.card svg, .big svg { display: inline-block; vertical-align: middle; }
.read { width: 86px; align-items: center; }
.read .card { width: 54px; }
.big { display: block; width: 52px; padding-top: 4px; height: 86px; white-space: nowrap; }
.big > svg:first-child { display: block; height: 44px; margin: 0 auto 2px; }
.ratio { font: 19px "Noto Sans", sans-serif; fill: #42a5f5; }
.num { font: bold 11px "Noto Sans", sans-serif; fill: #42a5f5; }
.xy { font: bold 10px "Noto Sans", sans-serif; fill: #42a5f5; }
.zoomcol { width: 88px; margin-left: -1px; }
.zoomio { width: 53px; }
.line { height: 28px; gap: 3px; white-space: nowrap; }
.combo { display: grid; height: 24px; margin: 1px 2px 3px; align-items: center; justify-items: end; }
.combo select { grid-area: 1 / 1; width: 100%; height: 100%; appearance: none; background: #fff; border: 1px solid #aaa; border-radius: 3px; padding: 0 3px; }
.combo svg { grid-area: 1 / 1; margin-right: 4px; pointer-events: none; }
.rule { flex: none; width: 1px; background: #ccc; margin: 2px 0; }
.rotate { width: 52px; }
.layouts { display: grid; grid-template-columns: repeat(4, 28px) 12px; grid-auto-rows: 37px; align-items: center; padding: 4px 1px 0 2px; height: 80px; }
.guides { display: grid; grid-template-columns: repeat(3, 28px) 12px 27px; grid-auto-rows: 28px; padding-left: 1px; }
.checker { width: 24px; height: 24px; background: repeating-conic-gradient(#888 0 25%, #f4f4f4 0 50%) 0 0 / 8px 8px; }
.split { width: 54px; }

.docbar { display: flex; background: #8a8a8a repeating-linear-gradient(45deg, #888 0 1px, #8d8d8d 1px 3px); border-bottom: 2px solid #f9e4b0; }
.doctab { display: flex; width: 100px; background: #f9e4b0; border-radius: 2px 2px 0 0; padding: 0 5px; position: relative; margin-bottom: -2px; justify-content: space-between; }
.doctab::after { content: ""; position: absolute; left: 5px; right: 5px; bottom: 3px; height: 2px; background: #8f8566; }
.doctab span { line-height: 32px; white-space: nowrap; }
.doctab button { height: 18px; margin-right: -1px; }
.newtab { width: 27px; height: 27px; margin: 3px 0 0 2px; background: #ccc; border-radius: 2px; }
.closedoc { width: 30px; height: 28px; margin: 2px 1px 0 auto; background: #d0d0d0; border-radius: 2px; }

.work { display: grid; grid-template: minmax(0, 1fr) / 31px 276px 11px minmax(0, 1fr); min-height: 0; }
.side { display: flex; flex-direction: column; padding-left: 1px; border-right: 1px solid #aaa; min-height: 0; }
.sidetop { display: flex; flex: none; justify-content: flex-end; padding: 2px 1px; height: 11px; background: #e6e6e6; margin-left: -1px; }
.grip { display: block; flex: none; background: radial-gradient(#aaa 1px, transparent 1px) 0 0 / 3px 3px; }
.side .grip { height: 11px; margin: 1px 1px 0; }
.dot { position: relative; }
.dot::after { content: ""; position: absolute; right: 0; bottom: 0; width: 4px; height: 4px; border-radius: 2px; background: #6faf35; }
.side hr { width: 28px; border: 0; height: 1px; background: #bbb; margin: 1px 0; }
.more { margin: 1px 0 0 9px; }

.panel { display: flex; flex-direction: column; min-height: 0; background: #f9e4b0; border: 1px solid #d8c28a; border-width: 1px 1px 0; padding: 0 2px 0 3px; }
.panel header { display: flex; justify-content: space-between; height: 24px; line-height: 23px; padding: 0 2px; }
.panel header button { height: 17px; }
.ptools { display: flex; flex: none; align-items: center; height: 31px; background: #f4f4f4; }
.handle { display: flex; flex-direction: column; flex: none; width: 10px; height: 28px; align-items: flex-start; justify-content: space-between; }
.handle .grip { width: 9px; height: 15px; }
.ptools .handle { margin: 0 2px 0 1px; }
.ptools .line { margin: 0 0 0 3px; gap: 2px; }
.ptools .line:nth-child(2) { margin: 0; }
.ptools .sep { margin: 0 1px 0 2px; }
.ptools .cell { margin: 0 3px; }
.overflow { margin-left: auto; width: 11px; height: 31px; background: #e4e4e4; padding-top: 22px; }
.list { flex: 1; background: #fff; display: flex; flex-direction: column; justify-content: space-between; min-height: 0; border-bottom: 1px solid #ccc; }
table { width: 100%; border-collapse: collapse; table-layout: fixed; }
.c1 { width: 105px; } .c2 { width: 80px; }
th { height: 20px; text-align: left; font-weight: normal; color: #777; padding: 0 6px; border: 1px solid #ddd; border-left: 0; }
th:last-child { border-right: 0; }
td { height: 22px; padding: 0; }
td:nth-child(2) { text-align: right; padding-right: 3px; }
.name { display: flex; align-items: center; gap: 6px; padding-left: 5px; }
.picked td:nth-child(-n+2) { background: #b5d5ef; box-shadow: inset 0 1px #7fb0dc, inset 0 -1px #7fb0dc; }
.edit { flex: 1; background: #e3effa; height: 20px; display: flex; align-items: center; margin-left: -2px; padding-left: 2px; }
.edit input { width: 68px; height: 15px; border: 0; padding: 0; background: #0b78d0; color: #fff; }
.mark { align-self: flex-end; opacity: .3; margin: 0 12px 11px 0; }
.panel footer { flex: none; height: 17px; line-height: 17px; background: #fff; padding-left: 3px; }
.panel footer b { font-weight: 600; }
.panel footer em { font: 8px "DejaVu Sans", sans-serif; color: #888; vertical-align: 1px; }

.splitter { display: flex; align-items: center; background: #a6a6a6; padding-left: 1px; }
.splitter button { width: 9px; height: 60px; background: #e0e0e0; border: 1px solid #777; border-radius: 3px; }

.viewer { display: grid; grid-template: minmax(0, 1fr) 31px / minmax(0, 1fr) 15px; border-left: 2px solid #ddd; min-height: 0; }
.canvas { background: #a0a0a0 repeating-linear-gradient(45deg, #9e9e9e 0 1px, #a5a5a5 1px 3px); border: 1px solid #333; border-top: 3px solid #555; overflow: hidden; display: flex; justify-content: center; padding-top: 4px; }
.paper { flex: none; background: #fff; border: 1px solid #222; box-shadow: 0 0 9px 2px #333; height: 392px; }
.notes text { font: 4px "Liberation Sans", sans-serif; fill: #000; stroke: none; white-space: pre; }
.notes text.room { font-size: 7px; }
.scroll { display: flex; flex-direction: column; align-items: center; padding: 5px 0 3px 1px; }
.scroll i { width: 5px; height: 48px; margin: 3px 0 auto; background: #858585; border-radius: 3px; }
.navbar { grid-column: 1 / 3; position: relative; display: flex; align-items: center; padding: 0 2px; }
.navbar .sq { margin-right: -1px; }
.navbar .handle { margin: 0 2px 0 3px; }
.navbar .handle:first-child { margin-left: 0; }
.navbar .gapl { margin-left: 11px; }
.navbar .handle.gapl { margin-left: 6px; }
.navbar .combo { width: 82px; margin: 0; }
.navbar .rule { margin: 0 3px 0 2px; align-self: stretch; }
.pageno { display: flex; align-items: center; flex: 1; max-width: 96px; height: 23px; margin: 0 3px; padding-right: 2px; background: #fff; border: 1px solid #aaa; border-radius: 3px; }
.pageno input { width: 100%; border: 0; padding: 0; text-align: right; background: none; }
.gaps { margin-left: 2px; }
.last { margin-left: auto; margin-right: 10px; }
.corner { position: absolute; right: 1px; top: 0; }
```
